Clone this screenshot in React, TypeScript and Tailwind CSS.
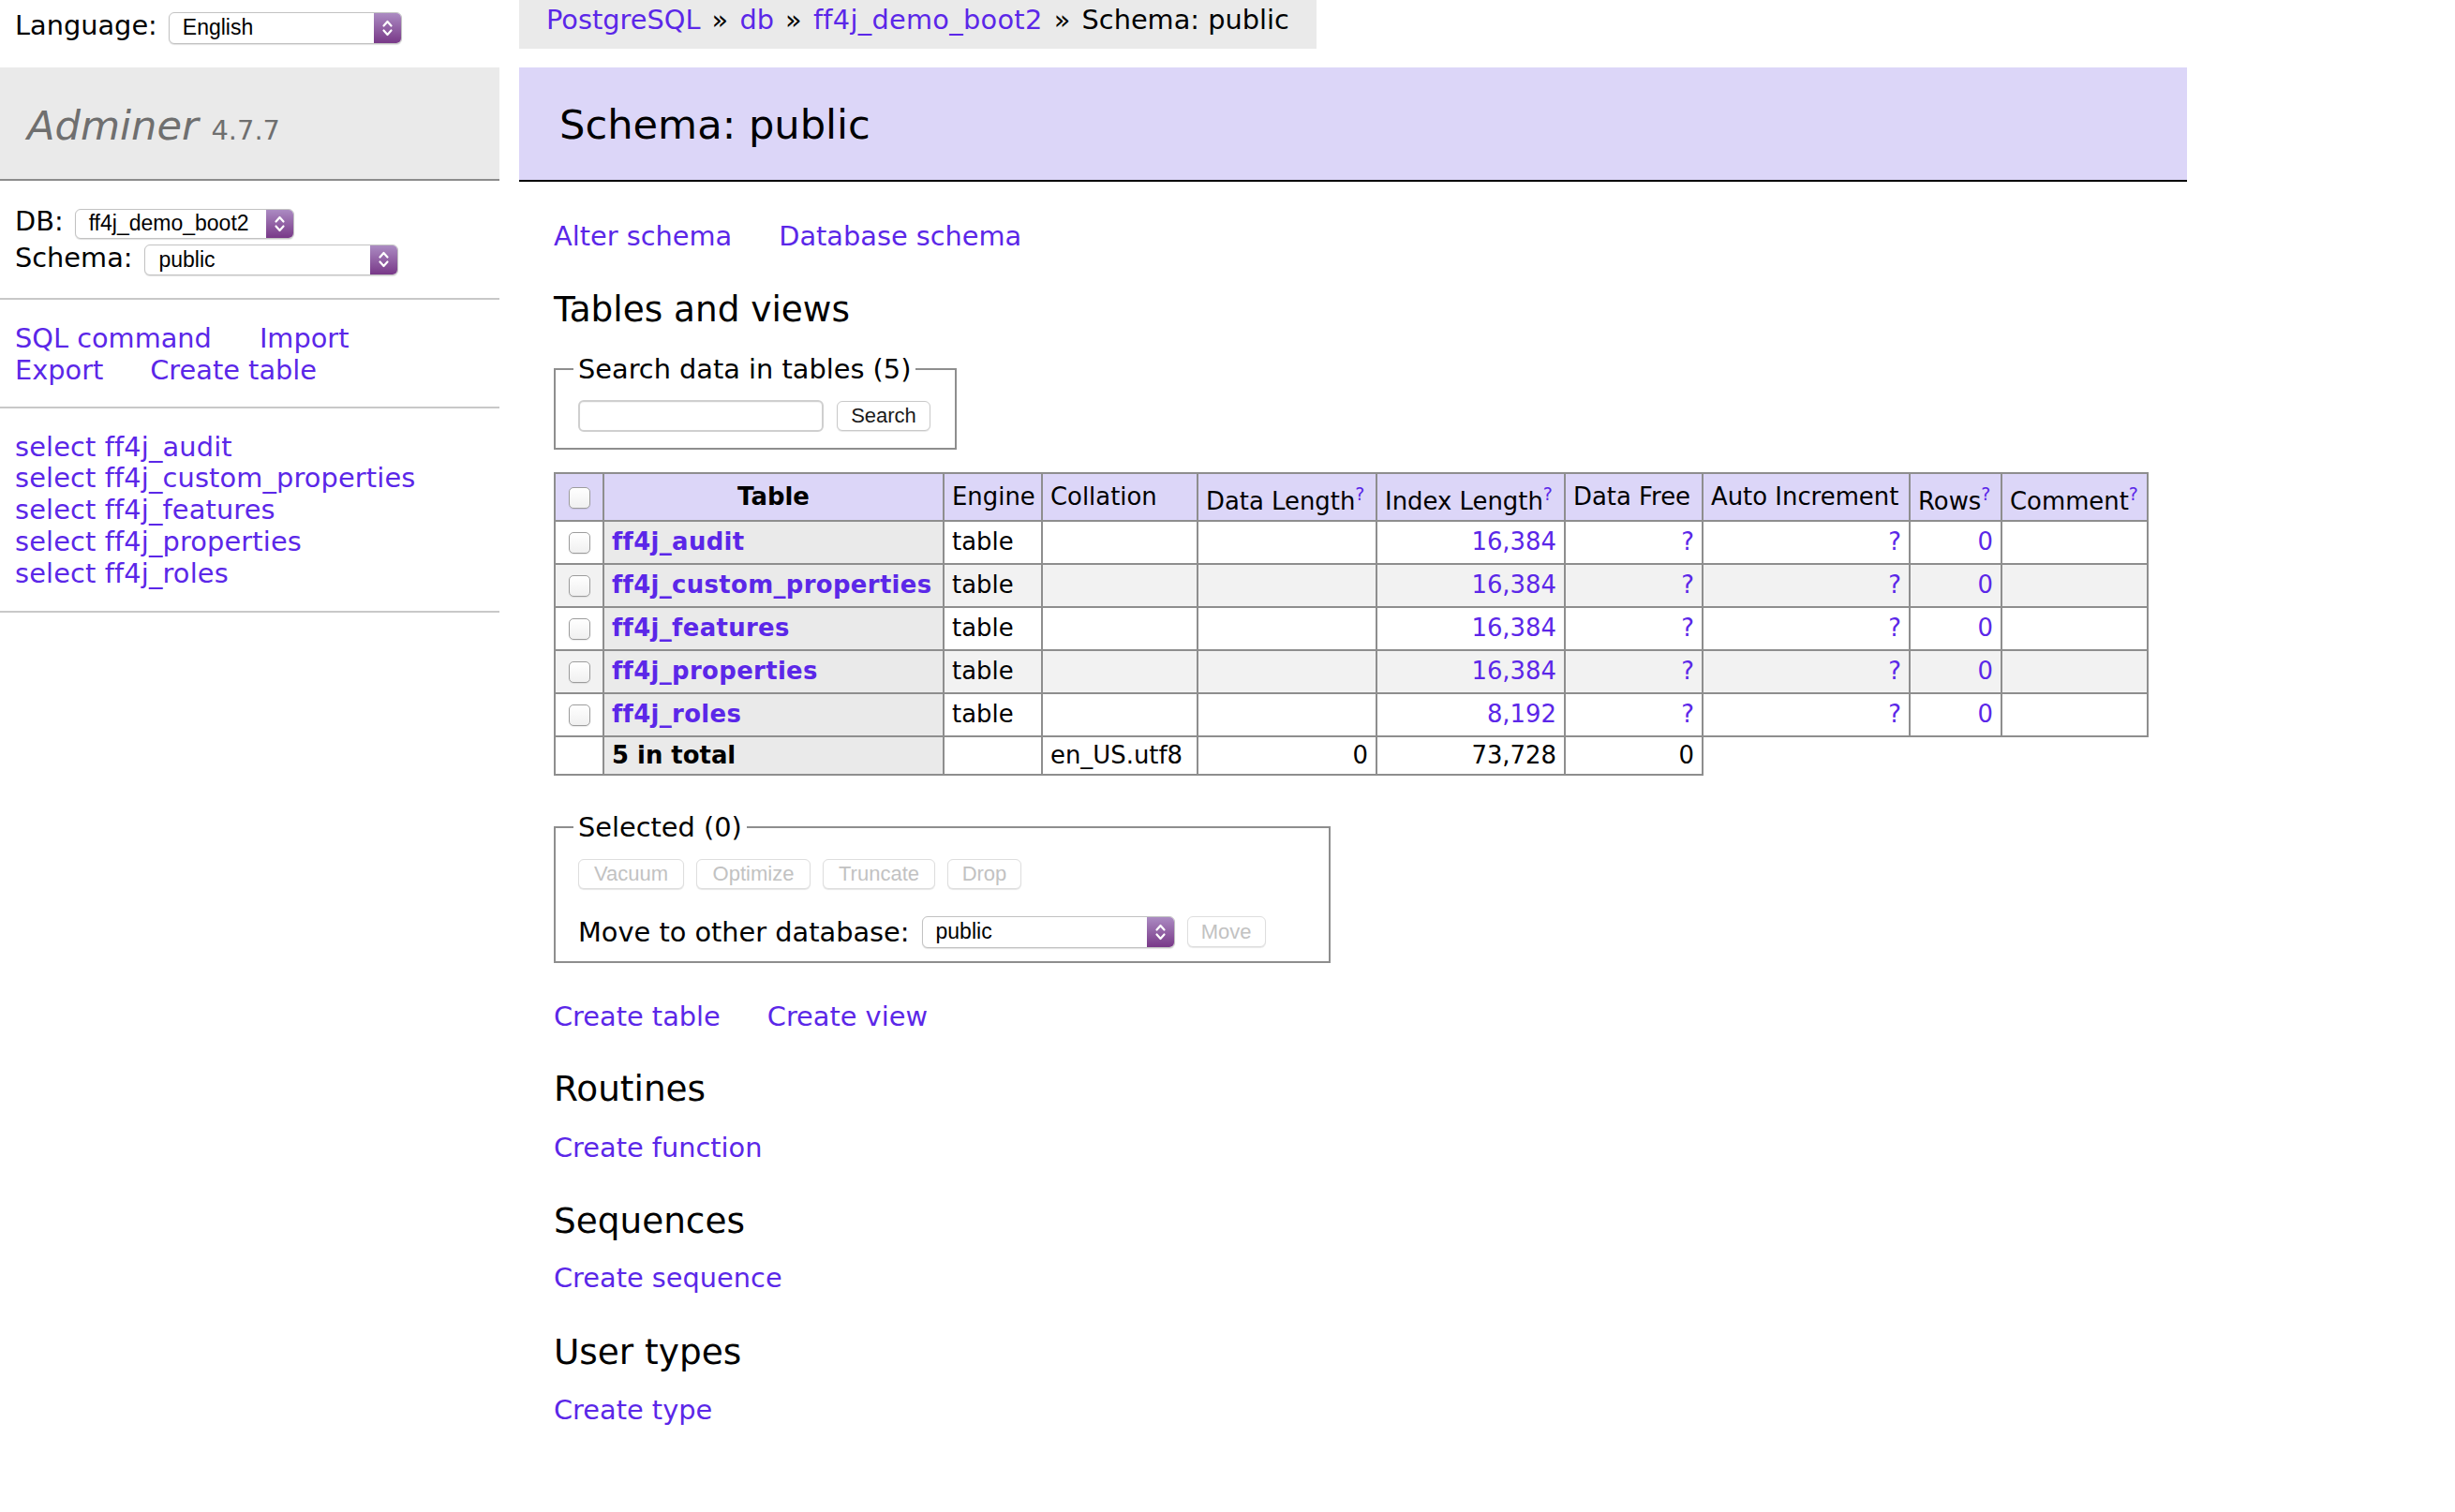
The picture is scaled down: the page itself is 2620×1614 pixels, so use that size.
import React from "react";

const LINK = "text-[#5b27e8]";
const GRID = "border-[#8e8e8e]";

const tables = [
  { name: "ff4j_audit", index: "16,384" },
  { name: "ff4j_custom_properties", index: "16,384" },
  { name: "ff4j_features", index: "16,384" },
  { name: "ff4j_properties", index: "16,384" },
  { name: "ff4j_roles", index: "8,192" },
];

function Chevrons() {
  return (
    <svg width="13" height="22" viewBox="0 0 13 22" fill="none" stroke="white" strokeWidth="2.2" strokeLinecap="round" strokeLinejoin="round">
      <path d="M2.5 8.5 L6.5 4 L10.5 8.5" />
      <path d="M2.5 13.5 L6.5 18 L10.5 13.5" />
    </svg>
  );
}

function FakeSelect({ value, className }: { value: string; className: string }) {
  return (
    <span
      className={`inline-flex items-stretch overflow-hidden rounded-[6px] border border-[#c2c2c2] bg-white font-['Liberation_Sans',Arial,sans-serif] text-[23px] text-black shadow-[0_1px_1px_rgba(0,0,0,0.12)] ${className}`}
    >
      <span className="flex flex-1 items-center pl-[14px] leading-none">{value}</span>
      <span className="flex w-[29px] items-center justify-center bg-linear-to-b from-[#ab8bc2] to-[#783888]">
        <Chevrons />
      </span>
    </span>
  );
}

function Check() {
  return (
    <span className="inline-block h-[23px] w-[23px] rounded-[5px] border border-[#9c9c9c] bg-linear-to-b from-white to-[#f0f0f0] align-middle shadow-[0_1px_1px_rgba(0,0,0,0.08)]" />
  );
}

function Btn({ label, className, disabled }: { label: string; className: string; disabled?: boolean }) {
  return (
    <button
      type="button"
      className={`inline-flex items-center justify-center rounded-[6px] border bg-white font-['Liberation_Sans',Arial,sans-serif] text-[22px] leading-none shadow-[0_1px_1px_rgba(0,0,0,0.1)] ${
        disabled ? "border-[#dedede] text-[#c2c2c2]" : "border-[#c9c9c9] text-[#1a1a1a]"
      } ${className}`}
    >
      {label}
    </button>
  );
}

function Sup() {
  return <sup className={`relative -top-[10px] align-baseline text-[19px] leading-none ${LINK}`}>?</sup>;
}

function Sidebar() {
  return (
    <aside className="w-[533px] shrink-0 text-[28.8px]">
      <div className="flex h-[72px] items-start pt-[9px] pl-[16px]">
        <div className="flex items-baseline gap-[12px]">
          <span className="leading-[36px]">Language:</span>
          <FakeSelect value="English" className="h-[34px] w-[249px]" />
        </div>
      </div>

      <h1 className="h-[121px] border-b-2 border-[#8c8c8c] bg-[#eaeaea] pt-[35px] pl-[29px] text-[43.2px] leading-[54px] text-[#6f6f6f]">
        <span className="italic">Adminer</span> <span className="text-[28.9px]">4.7.7</span>
      </h1>

      <div className="border-b-2 border-[#c8c8c8] pt-[25px] pb-[24px] pl-[16px]">
        <div className="flex items-baseline gap-[12px]">
          <span className="leading-[36px]">DB:</span>
          <FakeSelect value="ff4j_demo_boot2" className="h-[32px] w-[234px]" />
        </div>
        <div className="mt-[2px] flex items-baseline gap-[13px]">
          <span className="leading-[36px]">Schema:</span>
          <FakeSelect value="public" className="h-[33px] w-[271px]" />
        </div>
      </div>

      <div className={`border-b-2 border-[#c8c8c8] pt-[24px] pb-[22px] pl-[16px] leading-[34px] ${LINK}`}>
        <div className="flex gap-[51px]">
          <a>SQL command</a>
          <a>Import</a>
        </div>
        <div className="flex gap-[50px]">
          <a>Export</a>
          <a>Create table</a>
        </div>
      </div>

      <ul className={`border-b-2 border-[#c8c8c8] pt-[25px] pb-[23px] pl-[16px] leading-[33.75px] tracking-[0.15px] ${LINK}`}>
        {tables.map((t) => (
          <li key={t.name}>
            <a>select {t.name}</a>
          </li>
        ))}
      </ul>
    </aside>
  );
}

function TablesGrid() {
  const cell = `border-r-2 border-b-2 ${GRID} px-[8px] align-middle`;
  return (
    <table className={`mt-[24px] w-[1702px] table-fixed border-separate border-spacing-0 border-t-2 border-l-2 ${GRID} text-[25.9px]`}>
      <colgroup>
        <col className="w-[52px]" />
        <col className="w-[363px]" />
        <col className="w-[105px]" />
        <col className="w-[166px]" />
        <col className="w-[191px]" />
        <col className="w-[201px]" />
        <col className="w-[147px]" />
        <col className="w-[221px]" />
        <col className="w-[98px]" />
        <col className="w-[156px]" />
      </colgroup>
      <thead>
        <tr className="h-[46px] bg-[#dcd6f8]">
          <td className={`${cell} text-center`}>
            <Check />
          </td>
          <th className={`${cell} text-center font-bold`}>Table</th>
          <td className={`${cell} text-left`}>Engine</td>
          <td className={`${cell} text-left`}>Collation</td>
          <td className={`${cell} pt-[10px] text-left`}>
            Data Length<Sup />
          </td>
          <td className={`${cell} pt-[10px] text-left`}>
            Index Length<Sup />
          </td>
          <td className={`${cell} text-left`}>Data Free</td>
          <td className={`${cell} text-left`}>Auto Increment</td>
          <td className={`${cell} pt-[10px] text-left`}>
            Rows<Sup />
          </td>
          <td className={`${cell} pt-[10px] text-left`}>
            Comment<Sup />
          </td>
        </tr>
      </thead>
      <tbody>
        {tables.map((t, i) => (
          <tr key={t.name} className={`h-[46px] ${i % 2 === 1 ? "bg-[#f2f2f2]" : "bg-white"}`}>
            <td className={`${cell} text-center`}>
              <Check />
            </td>
            <th className={`${cell} bg-[#eaeaea] text-left font-bold tracking-[0.35px]`}>
              <a className={LINK}>{t.name}</a>
            </th>
            <td className={cell}>table</td>
            <td className={cell}></td>
            <td className={cell}></td>
            <td className={`${cell} text-right ${LINK}`}>{t.index}</td>
            <td className={`${cell} text-right ${LINK}`}>?</td>
            <td className={`${cell} text-right ${LINK}`}>?</td>
            <td className={`${cell} text-right ${LINK}`}>0</td>
            <td className={cell}></td>
          </tr>
        ))}
        <tr className="h-[41px]">
          <td className={cell}></td>
          <th className={`${cell} bg-[#eaeaea] text-left font-bold`}>5 in total</th>
          <td className={cell}></td>
          <td className={cell}>en_US.utf8</td>
          <td className={`${cell} text-right`}>0</td>
          <td className={`${cell} text-right`}>73,728</td>
          <td className={`${cell} text-right`}>0</td>
        </tr>
      </tbody>
    </table>
  );
}

function Sep() {
  return <span className="px-[3px]">»</span>;
}

export default function App() {
  return (
    <div className="flex min-h-[1614px] bg-white font-['DejaVu_Sans',Verdana,sans-serif] text-black">
      <Sidebar />

      <main className="ml-[21px] w-[1780px] text-[28.8px]">
        <div className="h-[52px] w-fit bg-[#eaeaea] px-[29px] leading-[42px] whitespace-nowrap">
          <a className={LINK}>PostgreSQL</a> <Sep /> <a className={LINK}>db</a> <Sep />{" "}
          <a className={`${LINK} tracking-[0.3px]`}>ff4j_demo_boot2</a> <Sep /> Schema: public
        </div>

        <h2 className="mt-[20px] flex h-[122px] items-center border-b-2 border-black bg-[#dcd6f8] pt-[2px] pl-[43px] text-[43.2px]">
          Schema: public
        </h2>

        <div className="pl-[37px]">
          <p className={`mt-[40px] flex gap-[50px] leading-[36px] ${LINK}`}>
            <a>Alter schema</a>
            <a>Database schema</a>
          </p>

          <h3 className="mt-[37px] text-[37.4px] leading-[47px]">Tables and views</h3>

          <fieldset className="mt-[22px] w-[430px] border-2 border-[#8e8e8e] pr-[25px] pb-[17px] pl-[24px]">
            <legend className="-ml-[5px] px-[5px] leading-[36px]">Search data in tables (5)</legend>
            <div className="mt-[15px] flex items-center gap-[14px]">
              <span className="h-[34px] w-[262px] rounded-[6px] border-2 border-[#cfcfcf] bg-white shadow-[inset_0_1px_1px_rgba(0,0,0,0.05)]" />
              <Btn label="Search" className="h-[32px] w-[100px]" />
            </div>
          </fieldset>

          <TablesGrid />

          <fieldset className="mt-[37px] w-[829px] border-2 border-[#8e8e8e] pb-[14px] pl-[24px]">
            <legend className="-ml-[5px] px-[5px] leading-[36px]">Selected (0)</legend>
            <div className="mt-[16px] flex gap-[13px]">
              <Btn label="Vacuum" disabled className="h-[32px] w-[113px]" />
              <Btn label="Optimize" disabled className="h-[32px] w-[122px]" />
              <Btn label="Truncate" disabled className="h-[32px] w-[120px]" />
              <Btn label="Drop" disabled className="h-[32px] w-[79px]" />
            </div>
            <div className="mt-[29px] flex items-center gap-[13px]">
              <span className="leading-[34px]">Move to other database:</span>
              <FakeSelect value="public" className="h-[34px] w-[270px]" />
              <Btn label="Move" disabled className="h-[33px] w-[84px]" />
            </div>
          </fieldset>

          <p className={`mt-[39px] flex gap-[50px] leading-[36px] ${LINK}`}>
            <a>Create table</a>
            <a>Create view</a>
          </p>

          <h3 className="mt-[36px] text-[37.4px] leading-[47px]">Routines</h3>
          <p className={`mt-[21px] leading-[36px] ${LINK}`}>
            <a>Create function</a>
          </p>

          <h3 className="mt-[37px] text-[37.4px] leading-[47px]">Sequences</h3>
          <p className={`mt-[19px] leading-[36px] ${LINK}`}>
            <a>Create sequence</a>
          </p>

          <h3 className="mt-[38px] text-[37.4px] leading-[47px]">User types</h3>
          <p className={`mt-[20px] leading-[36px] ${LINK}`}>
            <a>Create type</a>
          </p>
        </div>
      </main>
    </div>
  );
}
